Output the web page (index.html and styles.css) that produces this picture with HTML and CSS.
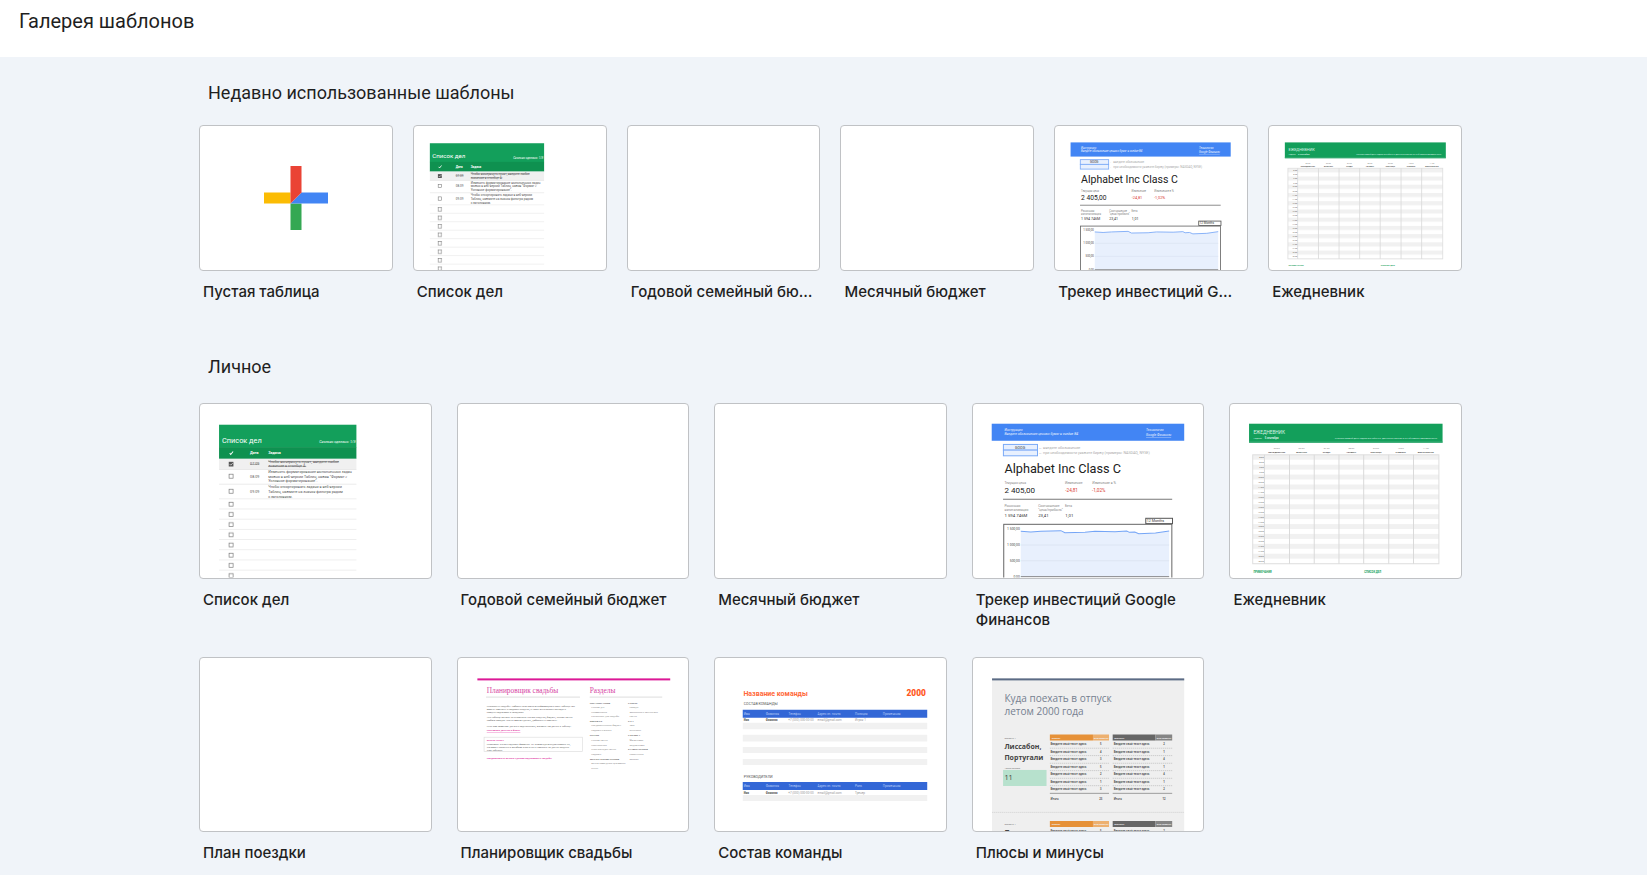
FILE: index.html
```html
<!DOCTYPE html>
<html lang="ru">
<head>
    <meta charset="UTF-8" />
    <meta name="viewport" content="width=device-width, initial-scale=1.0"/>
    <title>Галерея шаблонов</title>
    <link rel="stylesheet" href="styles.css">
</head>
<body>
<!-- Row patterns -->
<svg class="patterns" aria-hidden="true">
    <defs>
        <pattern id="todoRows" x="60" y="288" width="411" height="30.5" patternUnits="userSpaceOnUse">
            <rect width="411" height="31" fill="#fff"/>
            <rect y="28.5" width="411" height="2" fill="#e6e6e6"/>
            <rect x="30" y="9" width="12" height="12" fill="#fff" stroke="#777" stroke-width="2"/>
        </pattern>
        <pattern id="weekRows" x="70" y="155" width="558" height="29.6" patternUnits="userSpaceOnUse">
            <rect width="558" height="14.8" fill="#f1f1f1"/>
        </pattern>
    </defs>
</svg>

<!-- Shared thumbnails -->
<svg class="sprite" aria-hidden="true">
    <g id="checkbox"><rect x="-6" y="-6" width="12" height="12" fill="#fff" stroke="#777" stroke-width="2"/></g>

    <symbol id="todo" viewBox="3 3 690 522" preserveAspectRatio="xMidYMin slice">
        <rect x="60" y="65" width="411" height="68" fill="#139f5b"/>
        <rect x="60" y="132" width="411" height="35" fill="#0f9150"/>
        <g fill="#fff">
            <text x="69" y="119" font-size="22">Список дел</text>
            <text x="468" y="120" font-size="11" font-style="italic" text-anchor="end">Сколько сделано: 1/3</text>
            <path d="M92 150l3 4 7-9" fill="none" stroke="#fff" stroke-width="3"/>
            <text x="153" y="154" font-size="11" font-weight="700">Дата</text>
            <text x="207" y="154" font-size="11" font-weight="700">Задача</text>
        </g>
        <rect x="60" y="167" width="411" height="32" fill="#f0f0f0"/>
        <path d="M60 199h411M60 243h411M60 287h411" stroke="#e2e2e2" stroke-width="2"/>
        <rect x="89" y="176" width="14" height="14" fill="#555"/>
        <path d="M92 183l3 3 6-6" fill="none" stroke="#fff" stroke-width="2"/>
        <use href="#checkbox" x="96" y="219"/>
        <use href="#checkbox" x="96" y="264"/>
        <g font-size="11" fill="#555">
            <g text-decoration="line-through">
                <text x="153" y="186">07.09</text>
                <text x="207" y="179">Чтобы вычеркнуть пункт, введите любое</text>
                <text x="207" y="192">значение в столбце А.</text>
            </g>
            <text x="153" y="223">08.09</text>
            <text x="207" y="211">Изменить форматирование выполненных задач</text>
            <text x="207" y="224">можно в веб-версии Таблиц, нажав "Формат &gt;</text>
            <text x="207" y="237">Условное форматирование".</text>
            <text x="153" y="268">09.09</text>
            <text x="207" y="255">Чтобы отсортировать задачи в веб-версии</text>
            <text x="207" y="269">Таблиц, нажмите на значок фильтра рядом</text>
            <text x="207" y="283">с заголовком.</text>
        </g>
        <rect x="60" y="288" width="411" height="244" fill="url(#todoRows)"/>
    </symbol>

    <symbol id="finance" viewBox="3 3 690 522" preserveAspectRatio="xMidYMin slice">
        <rect x="59" y="62" width="576" height="51" fill="#4285f4"/>
        <g font-size="10" fill="#e8f0fe" font-style="italic">
            <text x="97" y="84">Инструкция</text>
            <text x="97" y="97">Введите обозначение ценных бумаг в ячейке B4</text>
            <text x="521" y="85">Технология</text>
            <text x="521" y="100" text-decoration="underline">Google Финансы</text>
        </g>
        <rect x="94" y="124" width="102" height="17" fill="#e8f0fe" stroke="#7baaf7" stroke-width="3"/>
        <rect x="94" y="141" width="102" height="17" fill="#e8f0fe" stroke="#7baaf7" stroke-width="3"/>
        <text x="144" y="137" font-size="11" text-anchor="middle" fill="#333">GOOG</text>
        <g font-size="11" fill="#aaa">
            <text x="199" y="137">← введите обозначение</text>
            <text x="199" y="154">← при необходимости укажите биржу (примеры: NASDAQ, NYSE)</text>
        </g>
        <text x="97" y="209" font-size="38" fill="#212121">Alphabet Inc Class C</text>
        <g font-size="10" fill="#888">
            <text x="97" y="241">Текущая цена</text>
            <text x="278" y="241">Изменение</text>
            <text x="360" y="241">Изменение в %</text>
            <text x="97" y="312">Рыночная</text>
            <text x="97" y="322">капитализация</text>
            <text x="198" y="312">Соотношение</text>
            <text x="198" y="322">"цена/прибыль"</text>
            <text x="278" y="312">Бета</text>
        </g>
        <text x="97" y="269" font-size="24" fill="#212121">2 405,00</text>
        <g font-size="14" fill="#d93a30">
            <text x="279" y="265">-24,81</text>
            <text x="359" y="265">-1,02%</text>
        </g>
        <path d="M93 288h506" stroke="#777" stroke-width="3"/>
        <g font-size="13" fill="#333">
            <text x="97" y="340">1 594 746M</text>
            <text x="198" y="340">23,41</text>
            <text x="279" y="340">1,01</text>
        </g>
        <rect x="520" y="345" width="80" height="16" fill="#fff" stroke="#555" stroke-width="3"/>
        <text x="523" y="357" font-size="11" fill="#333">12 Months</text>
        <rect x="95" y="363" width="503" height="180" fill="#fff" stroke="#666" stroke-width="3"/>
        <path d="M146 384l30 2 30-2 60-2 12 6 60-1 30-3 60 1 35-2 8 4 16-1 12 5 50-2 41-6v137H146z" fill="#e8f0fd"/>
        <path d="M146 425h444M146 472h444" stroke="#d8e0ee" stroke-width="2"/>
        <path d="M146 384l30 2 30-2 60-2 12 6 60-1 30-3 60 1 35-2 8 4 16-1 12 5 50-2 41-6" fill="none" stroke="#74a5f6" stroke-width="3"/>
        <path d="M146 520h444" stroke="#777" stroke-width="3"/>
        <g font-size="10" fill="#444" text-anchor="end">
            <text x="143" y="381">1 500,00</text>
            <text x="143" y="429">1 000,00</text>
            <text x="143" y="476">500,00</text>
            <text x="143" y="524">0,00</text>
        </g>
    </symbol>

    <symbol id="planner" viewBox="3 3 690 522" preserveAspectRatio="xMidYMin slice">
        <rect x="60" y="62" width="579" height="57" fill="#139f5b"/>
        <path d="M60 117h579" stroke="#3cab76" stroke-width="3"/>
        <g fill="#d9f2e5">
            <text x="73" y="94" font-size="14">ЕЖЕДНЕВНИК</text>
            <text x="73" y="107" font-size="7">Неделя:</text>
            <text x="107" y="107" font-size="8" font-weight="700">5 сентября</text>
            <text x="624" y="107" font-size="7" text-anchor="end">Укажите первый день недели в ячейке C3. Данные в строках 5 и 6 обновятся автоматически.</text>
        </g>
        <g font-size="7" fill="#888" text-anchor="middle">
            <text x="143" y="139">05.09</text>
            <text x="217" y="139">06.09</text>
            <text x="292" y="139">07.09</text>
            <text x="366" y="139">08.09</text>
            <text x="440" y="139">09.09</text>
            <text x="514" y="139">10.09</text>
            <text x="589" y="139">11.09</text>
        </g>
        <g font-size="7" font-weight="700" fill="#444" text-anchor="middle">
            <text x="143" y="149">ПОНЕДЕЛЬНИК</text>
            <text x="217" y="149">ВТОРНИК</text>
            <text x="292" y="149">СРЕДА</text>
            <text x="366" y="149">ЧЕТВЕРГ</text>
            <text x="440" y="149">ПЯТНИЦА</text>
            <text x="514" y="149">СУББОТА</text>
            <text x="589" y="149">ВОСКРЕСЕНЬЕ</text>
        </g>
        <rect x="71" y="155" width="557" height="326" fill="url(#weekRows)" stroke="#dedede" stroke-width="3"/>
        <path d="M106 155v326M181 155v326M255 155v326M329 155v326M403 155v326M478 155v326M552 155v326" stroke="#dadada" stroke-width="3"/>
        <g font-size="7" fill="#666" text-anchor="end">
            <text x="104" y="165">8:00</text>
            <text x="104" y="180">8:30</text>
            <text x="104" y="195">9:00</text>
            <text x="104" y="210">9:30</text>
            <text x="104" y="224">10:00</text>
            <text x="104" y="239">10:30</text>
            <text x="104" y="254">11:00</text>
            <text x="104" y="269">11:30</text>
            <text x="104" y="284">12:00</text>
            <text x="104" y="298">12:30</text>
            <text x="104" y="313">13:00</text>
            <text x="104" y="328">13:30</text>
            <text x="104" y="343">14:00</text>
            <text x="104" y="358">14:30</text>
            <text x="104" y="372">15:00</text>
            <text x="104" y="387">15:30</text>
            <text x="104" y="402">16:00</text>
            <text x="104" y="417">16:30</text>
            <text x="104" y="432">17:00</text>
            <text x="104" y="446">17:30</text>
            <text x="104" y="461">18:00</text>
            <text x="104" y="476">18:30</text>
        </g>
        <g font-size="8" font-weight="700" fill="#139f5b">
            <text x="73" y="508">ПРИМЕЧАНИЯ</text>
            <text x="405" y="508">СПИСОК ДЕЛ</text>
        </g>
    </symbol>
</svg>

<header class="header">
    <h1>Галерея шаблонов</h1>
</header>

<main class="gallery">
    <section class="recent">
        <h2>Недавно использованные шаблоны</h2>
        <div class="grid">
            <a class="template" href="#blank">
                <span class="thumb thumb-blank">
                    <svg class="plus" viewBox="0 0 64 64" aria-hidden="true">
                        <path d="M26.5 37.5h11V64h-11z" fill="#34a853"/>
                        <path d="M0 26.5h26.5v11H0z" fill="#fbbc04"/>
                        <path d="M37.5 26.5H64v11H26.5z" fill="#4285f4"/>
                        <path d="M26.5 0h11v26.5l-11 11z" fill="#ea4335"/>
                    </svg>
                </span>
                <span class="name">Пустая таблица</span>
            </a>
            <a class="template" href="#todo-list">
                <span class="thumb"><svg aria-hidden="true"><use href="#todo"/></svg></span>
                <span class="name">Список дел</span>
            </a>
            <a class="template" href="#annual-budget">
                <span class="thumb"></span>
                <span class="name">Годовой семейный бюджет</span>
            </a>
            <a class="template" href="#monthly-budget">
                <span class="thumb"></span>
                <span class="name">Месячный бюджет</span>
            </a>
            <a class="template" href="#investments">
                <span class="thumb"><svg aria-hidden="true"><use href="#finance"/></svg></span>
                <span class="name">Трекер инвестиций Google Финансов</span>
            </a>
            <a class="template" href="#schedule">
                <span class="thumb"><svg aria-hidden="true"><use href="#planner"/></svg></span>
                <span class="name">Ежедневник</span>
            </a>
        </div>
    </section>

    <section class="personal">
        <h2>Личное</h2>
        <div class="grid">
            <a class="template" href="#todo-list">
                <span class="thumb"><svg aria-hidden="true"><use href="#todo"/></svg></span>
                <span class="name">Список дел</span>
            </a>
            <a class="template" href="#annual-budget">
                <span class="thumb"></span>
                <span class="name">Годовой семейный бюджет</span>
            </a>
            <a class="template" href="#monthly-budget">
                <span class="thumb"></span>
                <span class="name">Месячный бюджет</span>
            </a>
            <a class="template" href="#investments">
                <span class="thumb"><svg aria-hidden="true"><use href="#finance"/></svg></span>
                <span class="name">Трекер инвестиций Google Финансов</span>
            </a>
            <a class="template" href="#schedule">
                <span class="thumb"><svg aria-hidden="true"><use href="#planner"/></svg></span>
                <span class="name">Ежедневник</span>
            </a>
            <a class="template" href="#trip">
                <span class="thumb"></span>
                <span class="name">План поездки</span>
            </a>
            <a class="template" href="#wedding">
                <span class="thumb">
                    <svg class="serif" viewBox="3 3 690 522" preserveAspectRatio="xMidYMin slice" aria-hidden="true">
                        <rect x="61" y="64" width="577" height="6" fill="#dc1896"/>
                        <g font-size="22" fill="#d6419f">
                            <text x="89" y="108">Планировщик свадьбы</text>
                            <text x="397" y="108">Разделы</text>
                        </g>
                        <path d="M87 120h281M397 120h217" stroke="#ccc" stroke-width="2"/>
                        <g font-size="8" fill="#333">
                            <text x="89" y="151">Планируете свадьбу? Добавьте всю важную информацию в нашу таблицу. Вы</text>
                            <text x="89" y="159">можете изменять и создавать разделы, а также отслеживать расходы и</text>
                            <text x="89" y="168">процесс подготовки к празднику.</text>
                            <text x="89" y="183">Эта таблица состоит из нескольких листов: разделы, бюджет, список гостей</text>
                            <text x="89" y="192">любого порядка. Листы можно удалять, добавлять и изменять.</text>
                            <text x="89" y="209">Если вам помогают друзья и родственники, откройте им доступ к таблице.</text>
                            <text x="89" y="264">Некоторые ячейки содержат формулы. Не рекомендуем редактировать их,</text>
                            <text x="89" y="273">это может привести к ошибкам в расчётах и повлиять на другие разделы</text>
                            <text x="89" y="281">этой таблицы.</text>
                        </g>
                        <rect x="81" y="240" width="294" height="43" fill="none" stroke="#ddd" stroke-width="2"/>
                        <g font-size="8" font-weight="700" fill="#dc1896">
                            <text x="89" y="222" text-decoration="underline">Настройки доступа к файлу</text>
                            <text x="89" y="251">ВНИМАНИЕ!</text>
                            <text x="89" y="306">Поздравляем и желаем удачной подготовки к свадьбе!</text>
                        </g>
                        <g font-size="8" font-weight="700" fill="#444">
                            <text x="397" y="140">ОРГАНИЗАЦИЯ</text>
                            <text x="397" y="195">БЮДЖЕТ</text>
                            <text x="397" y="237">ГОСТИ</text>
                            <text x="397" y="307">МЕСТО ПРОВЕДЕНИЯ</text>
                            <text x="512" y="140">СТИЛЬ</text>
                            <text x="512" y="195">ЕДА</text>
                            <text x="512" y="237">СЪЕМКА</text>
                            <text x="512" y="279">РАЗВЛЕЧЕНИЯ</text>
                        </g>
                        <g font-size="8" fill="#666">
                            <text x="402" y="153">Список дел</text>
                            <text x="402" y="167">Напоминания</text>
                            <text x="402" y="180">Расписание дня свадьбы</text>
                            <text x="402" y="208">Предварительный бюджет</text>
                            <text x="402" y="222">Подарки и оплата</text>
                            <text x="402" y="250">Список гостей</text>
                            <text x="402" y="265">Приглашения</text>
                            <text x="402" y="279">План рассадки гостей</text>
                            <text x="402" y="293">Подарки</text>
                            <text x="402" y="321">Место проведения церемонии</text>
                            <text x="402" y="334">Отель</text>
                            <text x="516" y="153">Наряды</text>
                            <text x="516" y="167">Украшения и аксессуары</text>
                            <text x="516" y="180">Цветы</text>
                            <text x="516" y="208">Торт</text>
                            <text x="516" y="222">Кейтеринг</text>
                            <text x="516" y="250">Фотосъемка</text>
                            <text x="516" y="265">Видеосъемка</text>
                            <text x="516" y="293">Развлечения</text>
                            <text x="516" y="307">Музыка</text>
                        </g>
                    </svg>
                </span>
                <span class="name">Планировщик свадьбы</span>
            </a>
            <a class="template" href="#team">
                <span class="thumb">
                    <svg viewBox="3 3 690 522" preserveAspectRatio="xMidYMin slice" aria-hidden="true">
                        <text x="88" y="116" font-size="21" font-weight="700" fill="#ff6839">Название команды</text>
                        <text x="634" y="116" font-size="25" font-weight="900" text-anchor="end" fill="#ff5722">2000</text>
                        <g font-size="11" fill="#555">
                            <text x="89" y="145">СОСТАВ КОМАНДЫ</text>
                            <text x="89" y="362">РУКОВОДИТЕЛИ</text>
                        </g>
                        <path d="M86 158h552v24H86zM86 374h552v24H86z" fill="#3367d6"/>
                        <path d="M86 197h552v19H86zM86 233h552v20H86zM86 269h552v18H86zM86 305h552v18H86zM86 413h552v18H86z" fill="#f1f1f1"/>
                        <g font-size="9" fill="#b4caf7">
                            <text x="89" y="174">Имя</text>
                            <text x="155" y="174">Фамилия</text>
                            <text x="223" y="174">Телефон</text>
                            <text x="310" y="174">Адрес эл. почты</text>
                            <text x="422" y="174">Позиция</text>
                            <text x="505" y="174">Примечания</text>
                            <text x="89" y="390">Имя</text>
                            <text x="155" y="390">Фамилия</text>
                            <text x="223" y="390">Телефон</text>
                            <text x="310" y="390">Адрес эл. почты</text>
                            <text x="422" y="390">Роль</text>
                            <text x="505" y="390">Примечания</text>
                        </g>
                        <g font-size="8" font-weight="700" fill="#555">
                            <text x="89" y="193">Имя</text>
                            <text x="155" y="193">Фамилия</text>
                            <text x="89" y="409">Имя</text>
                            <text x="155" y="409">Фамилия</text>
                        </g>
                        <g font-size="9" fill="#999">
                            <text x="222" y="193">+7 (000) 000-00-00</text>
                            <text x="310" y="193">email@gmail.com</text>
                            <text x="422" y="193">Игрок 1</text>
                            <text x="222" y="409">+7 (000) 000-00-00</text>
                            <text x="310" y="409">email@gmail.com</text>
                            <text x="422" y="409">Тренер</text>
                        </g>
                    </svg>
                </span>
                <span class="name">Состав команды</span>
            </a>
            <a class="template" href="#pros-and-cons">
                <span class="thumb">
                    <svg class="open-sans" viewBox="3 3 690 522" preserveAspectRatio="xMidYMin slice" aria-hidden="true">
                        <rect x="60" y="64" width="575" height="464" fill="#efefef"/>
                        <rect x="60" y="64" width="575" height="6" fill="#5b6b85"/>
                        <g font-size="30" fill="#758090">
                            <text x="97" y="135">Куда поехать в отпуск</text>
                            <text x="97" y="173">летом 2000 года</text>
                        </g>
                        <g font-size="21" font-weight="700" fill="#444">
                            <text x="97" y="274">Лиссабон,</text>
                            <text x="97" y="309">Португали</text>
                        </g>
                        <text x="97" y="335" font-size="7" fill="#666">Число баллов</text>
                        <rect x="93" y="338" width="130" height="48" fill="#b7e1cd"/>
                        <text x="97" y="369" font-size="22" fill="#444">11</text>
                        <g id="optionHead">
                            <text x="97" y="244" font-size="7" fill="#666">Вариант 1</text>
                            <path d="M233 232h129v18H233z" fill="#e69138"/>
                            <path d="M362 232h48v18h-48z" fill="#edb06f"/>
                            <path d="M421 232h128v18H421z" fill="#666"/>
                            <path d="M549 232h50v18h-50z" fill="#858585"/>
                            <g font-size="7" font-weight="700" fill="#f3f3f3">
                                <text x="239" y="244">Плюсы</text>
                                <text x="364" y="244">Значимость</text>
                                <text x="426" y="244">Минусы</text>
                                <text x="552" y="244">Значимость</text>
                            </g>
                            <g font-size="8" font-weight="700" fill="#555">
                                <text x="235" y="264">Введите свой текст здесь</text>
                                <text x="383" y="264">5</text>
                                <text x="424" y="264">Введите свой текст здесь</text>
                                <text x="572" y="264">2</text>
                            </g>
                        </g>
                        <g font-size="8" font-weight="700" fill="#555">
                            <text x="235" y="286">Введите свой текст здесь</text>
                            <text x="383" y="286">4</text>
                            <text x="424" y="286">Введите свой текст здесь</text>
                            <text x="572" y="286">1</text>
                            <text x="235" y="308">Введите свой текст здесь</text>
                            <text x="383" y="308">3</text>
                            <text x="424" y="308">Введите свой текст здесь</text>
                            <text x="572" y="308">4</text>
                            <text x="235" y="331">Введите свой текст здесь</text>
                            <text x="383" y="331">5</text>
                            <text x="424" y="331">Введите свой текст здесь</text>
                            <text x="572" y="331">1</text>
                            <text x="235" y="353">Введите свой текст здесь</text>
                            <text x="383" y="353">2</text>
                            <text x="424" y="353">Введите свой текст здесь</text>
                            <text x="572" y="353">4</text>
                            <text x="235" y="376">Введите свой текст здесь</text>
                            <text x="383" y="376">1</text>
                            <text x="424" y="376">Введите свой текст здесь</text>
                            <text x="572" y="376">1</text>
                            <text x="235" y="398">Введите свой текст здесь</text>
                            <text x="383" y="398">3</text>
                            <text x="424" y="398">Введите свой текст здесь</text>
                            <text x="572" y="398">2</text>
                            <text x="235" y="429">Итого</text>
                            <text x="381" y="429">23</text>
                            <text x="424" y="429">Итого</text>
                            <text x="570" y="429">12</text>
                        </g>
                        <path d="M233 273h177M421 273h178M233 295h177M421 295h178M233 318h177M421 318h178M233 340h177M421 340h178M233 363h177M421 363h178M233 385h177M421 385h178" stroke="#bbb" stroke-width="2" stroke-dasharray="4 2"/>
                        <path d="M233 408h177M421 408h178" stroke="#777" stroke-width="2"/>
                        <path d="M60 465h575" stroke="#ccc" stroke-width="2" stroke-dasharray="4 2"/>
                        <use href="#optionHead" y="259"/>
                        <text x="97" y="533" font-size="21" font-weight="700" fill="#444">Париж</text>
                    </svg>
                </span>
                <span class="name">Плюсы и минусы</span>
            </a>
        </div>
    </section>
</main>
</body>
</html>
```

FILE: styles.css
```css
* {
    box-sizing: border-box;
}
body {
    font-family: Inter, "Noto Sans", sans-serif;
    background: #f0f4f9;
    color: #1f1f1f;
    margin: 0;
}
.patterns {
    position: absolute;
    width: 0;
    height: 0;
}
.sprite {
    display: none;
}
.header {
    background: #ffffff;
    height: 57px;
    padding: 9px 19px;
}
h1, h2 {
    margin: 0;
    font-family: Roboto, "Noto Sans", sans-serif;
    font-size: 18px;
    font-weight: 400;
    line-height: 24px;
}
h1 {
    font-size: 20px;
}
.gallery {
    max-width: 1277px;
    margin: 0 auto;
    padding: 24px 0 8px 14px;
}
h2 {
    padding-left: 9px;
}
.grid {
    display: grid;
}
.recent .grid {
    grid-template-columns: repeat(6, minmax(0, 1fr));
    gap: 20px;
    margin-top: 20px;
}
.personal {
    margin-top: 53px;
}
.personal .grid {
    grid-template-columns: repeat(5, minmax(0, 1fr));
    gap: 27px 25px;
    margin-top: 24px;
}
.template {
    color: inherit;
    text-decoration: none;
}
.thumb {
    display: block;
    aspect-ratio: 232 / 175;
    background: #ffffff;
    border: 1px solid #c0c2c5;
    border-radius: 4px;
    overflow: hidden;
}
.template:hover .thumb {
    border-color: #0f9d58;
}
.thumb svg {
    display: block;
    width: 100%;
    height: 100%;
    font-family: Roboto, sans-serif;
}
.thumb .serif {
    font-family: "Liberation Serif", serif;
}
.thumb .open-sans {
    font-family: "Open Sans", sans-serif;
}
.thumb-blank {
    display: flex;
    align-items: center;
    justify-content: center;
}
.thumb .plus {
    width: 64px;
    height: 64px;
}
.name {
    display: block;
    margin: 11px 8px 0 4px;
    font-size: 15px;
    font-weight: 500;
    line-height: 20px;
}
.recent .name {
    overflow: hidden;
    text-overflow: ellipsis;
    white-space: nowrap;
}
```
